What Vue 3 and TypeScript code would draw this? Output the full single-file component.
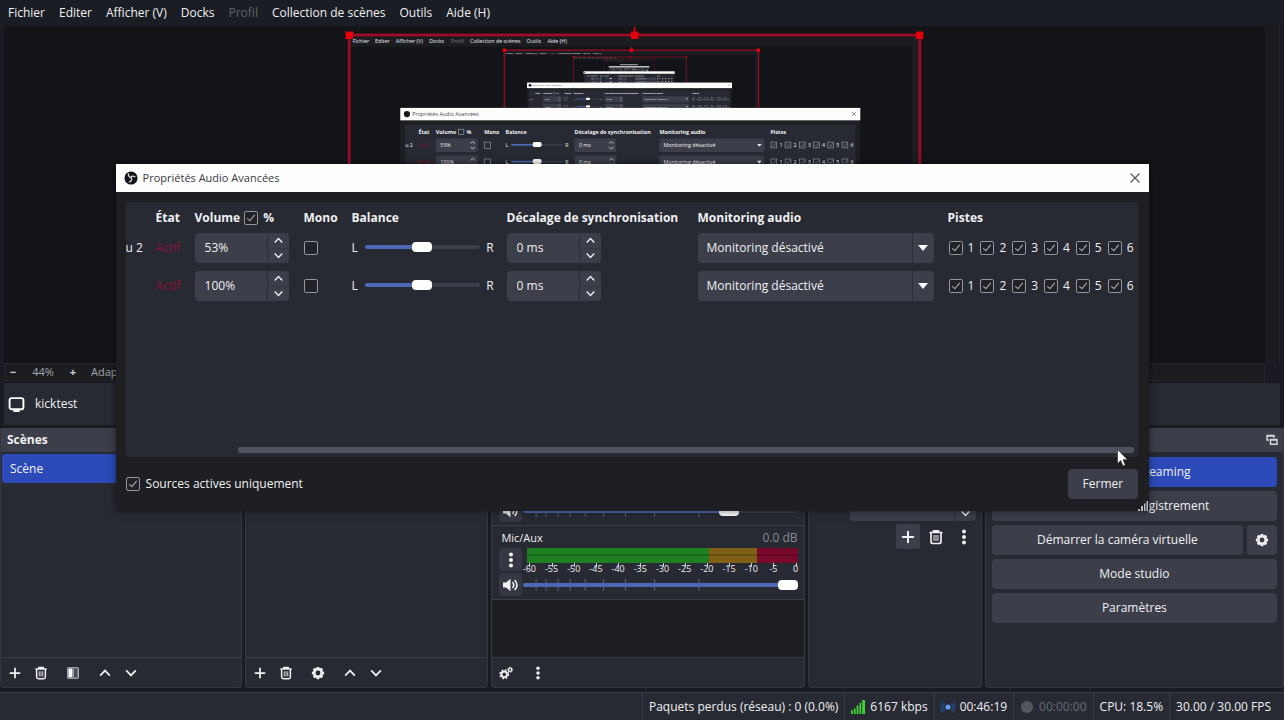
<script setup lang="ts">
import { ref } from 'vue'

interface MenuEntry { label: string; x: number; disabled?: boolean }
interface AudioRow { name: string; volume: string; offset: string; balance: number }
interface MixerStrip { name: string; level: string; volume: number }

const menus: MenuEntry[] = [
  { label: 'Fichier', x: 8 },
  { label: 'Editer', x: 58 },
  { label: 'Afficher (V)', x: 105 },
  { label: 'Docks', x: 180 },
  { label: 'Profil', x: 229, disabled: true },
  { label: 'Collection de scènes', x: 272 },
  { label: 'Outils', x: 399 },
  { label: 'Aide (H)', x: 446 },
]

const rows = ref<AudioRow[]>([
  { name: 'u 2', volume: '53%', offset: '0 ms', balance: 50 },
  { name: '', volume: '100%', offset: '0 ms', balance: 50 },
])

const strips = ref<MixerStrip[]>([
  { name: 'Audio du bureau 2', level: '-5.5 dB', volume: 77 },
  { name: 'Mic/Aux', level: '0.0 dB', volume: 100 },
])

const tracks = [1, 2, 3, 4, 5, 6]
const scale = ['-60', '-55', '-50', '-45', '-40', '-35', '-30', '-25', '-20', '-15', '-10', '-5', '0']
const faderTicks = [13, 23, 35, 47, 62, 80, 102, 131, 175]

/* The captured display contains the preview itself, so each level repeats the previous one at this ratio. */
const ratio = 0.4455
const levels = [0, 1, 2, 3, 4].map((depth) => {
  const k = Math.pow(ratio, depth)
  const sum = (1 - k) / (1 - ratio)
  return {
    depth,
    legible: depth < 2,
    transform: `translate(${349 * sum} ${34 * sum}) scale(${k})`,
  }
})
const levelsReversed = [...levels].reverse()
const sceneColumns = [
  { label: 'État', x: 156, w: 26 },
  { label: 'Volume', x: 195, w: 46 },
  { label: '%', x: 264, w: 12 },
  { label: 'Mono', x: 304, w: 34 },
  { label: 'Balance', x: 352, w: 50 },
  { label: 'Décalage de synchronisation', x: 507, w: 176 },
  { label: 'Monitoring audio', x: 698, w: 106 },
  { label: 'Pistes', x: 948, w: 36 },
]
</script>

<template>
  <div class="app">
    <svg class="sprite" aria-hidden="true">
      <symbol id="i-plus" viewBox="0 0 16 16"><path d="M8 2v12M2 8h12" fill="none" stroke="currentColor" stroke-width="2" /></symbol>
      <symbol id="i-trash" viewBox="0 0 16 16">
        <path d="M1.5 3.5h13M5.5 3V1.8h5V3M3 4v8.5q0 2 2 2h6q2 0 2-2V4" fill="none" stroke="currentColor" stroke-width="1.7" />
        <path d="M6 6v6M8 6v6M10 6v6" stroke="currentColor" stroke-width="1" />
      </symbol>
      <symbol id="i-gear" viewBox="0 0 16 16">
        <path fill="currentColor" fill-rule="evenodd" d="M6.600 1h2.800l.5 1.900 1.900-.9 2.100 2.100-1 1.800 2.100.7v2.800l-2.100.7 1 1.800-2.100 2.100-1.900-.9-.5 1.900H6.600l-.6-1.900-1.800.9-2.100-2.100 1-1.800L1 9.400V6.600l2.100-.7-1-1.800L4.200 2l1.800.9zM8 5.200a2.800 2.800 0 1 0 0 5.600a2.800 2.800 0 1 0 0-5.600z" />
      </symbol>
      <symbol id="i-gears" viewBox="0 0 16 16">
        <circle cx="6" cy="9.500" r="3.200" fill="none" stroke="currentColor" stroke-width="2.200" />
        <circle cx="6" cy="9.500" r="4.900" fill="none" stroke="currentColor" stroke-width="1.600" stroke-dasharray="2.100 1.750" />
        <circle cx="12.700" cy="4.300" r="1.900" fill="none" stroke="currentColor" stroke-width="1.500" />
        <circle cx="12.700" cy="4.300" r="2.900" fill="none" stroke="currentColor" stroke-width="1" stroke-dasharray="1.500 1.500" />
      </symbol>
      <symbol id="i-up" viewBox="0 0 16 16"><path d="M2.500 11L8 5.200 13.500 11" fill="none" stroke="currentColor" stroke-width="2" /></symbol>
      <symbol id="i-down" viewBox="0 0 16 16"><path d="M2.500 5L8 10.800 13.500 5" fill="none" stroke="currentColor" stroke-width="2" /></symbol>
      <symbol id="i-dots" viewBox="0 0 16 16"><g fill="currentColor"><circle cx="8" cy="2.500" r="2" /><circle cx="8" cy="8" r="2" /><circle cx="8" cy="13.500" r="2" /></g></symbol>
      <symbol id="i-filter" viewBox="0 0 16 16">
        <rect x="2" y="2" width="12" height="12" rx="1" fill="#4b4e58" stroke="#b9bbc2" stroke-width="1.400" />
        <path d="M3 3h4v10H3z" fill="#fefefe" /><path d="M7 3h2v10H7z" fill="#a5a7ae" />
      </symbol>
      <symbol id="i-speaker" viewBox="0 0 16 16">
        <path d="M0 5.500h3L7.500 1.800v12.400L3 10.500H0z" fill="currentColor" />
        <path d="M9.500 5q2.500 3 0 6M11.700 3q4.500 5 0 10" fill="none" stroke="currentColor" stroke-width="1.600" />
      </symbol>
      <symbol id="i-obs" viewBox="0 0 16 16">
        <circle cx="8" cy="8" r="7.500" fill="#15161a" />
        <path d="M5 3.200q0 4 3.300 4.200M12.500 6.600Q8.800 4.700 8.300 7.400M6.200 12.600q3.600-1.600 2.100-5.200" fill="none" stroke="#d9d9dc" stroke-width="1.500" stroke-linecap="round" />
      </symbol>
    </svg>

    <nav class="menubar">
      <button v-for="m in menus" :key="m.label" type="button" :disabled="m.disabled">{{ m.label }}</button>
    </nav>

    <section class="preview">
      <div class="canvas">
        <svg class="scene" viewBox="0 0 1284 720" aria-hidden="true">
          <g v-for="l in levels" :key="'b' + l.depth" :transform="l.transform">
            <rect width="1284" height="720" fill="#1b1d22" />
            <rect x="4" y="26" width="1261" height="337" fill="#131418" />
            <g v-if="l.legible" class="scene-text">
              <text v-for="m in menus" :key="m.label" :x="m.x" y="18" :opacity="m.disabled ? 0.4 : 1">{{ m.label }}</text>
            </g>
            <path v-else d="M8 13h480" stroke="#7d7f85" stroke-width="6" stroke-dasharray="36 14" />
            <rect y="383" width="1284" height="305" fill="#272a33" />
            <rect width="1284" height="720" fill="none" stroke="#a30b24" stroke-width="6" />
            <path d="M642 0v-18" stroke="#e0000e" stroke-width="4" />
            <path d="M-8 -8h17v17h-17zM1275 -8h17v17h-17zM634 -8h17v17h-17z" fill="#e0000e" />
          </g>
          <g v-for="l in levelsReversed" :key="'d' + l.depth" :transform="l.transform">
            <rect x="115" y="164" width="1035" height="347" fill="#1d1f23" />
            <rect x="126" y="202" width="1013" height="255" fill="#272a33" />
            <rect x="115" y="164" width="1035" height="28" fill="#fefefe" />
            <circle cx="130" cy="178" r="7" fill="#15161a" />
            <path d="M1131 173l9 9M1140 173l-9 9" stroke="#555" stroke-width="1.500" />
            <text v-if="l.legible" class="scene-title" x="142" y="182">Propriétés Audio Avancées</text>
            <g v-if="l.legible" class="scene-text scene-bold">
              <text v-for="c in sceneColumns" :key="c.label" :x="c.x" y="222">{{ c.label }}</text>
            </g>
            <g v-else fill="#b4b5ba">
              <rect v-for="c in sceneColumns" :key="c.label" :x="c.x" y="214" :width="c.w" height="7" />
            </g>
            <rect x="246" y="212" width="12" height="12" fill="none" stroke="#9b9da5" stroke-width="1.500" />
            <g v-for="(r, i) in rows" :key="i" :transform="`translate(0 ${i * 38})`" class="scene-text">
              <rect x="195" y="233" width="94" height="30" rx="3" fill="#3c3e4a" />
              <rect x="507" y="233" width="94" height="30" rx="3" fill="#3c3e4a" />
              <rect x="698" y="233" width="236" height="30" rx="3" fill="#3c3e4a" />
              <rect x="304" y="241" width="14" height="14" fill="none" stroke="#9b9da5" stroke-width="1.500" />
              <path d="M365 247h50" stroke="#4f68b6" stroke-width="4" />
              <path d="M430 247h50" stroke="#3c3e4a" stroke-width="4" />
              <rect x="413" y="241" width="20" height="11" rx="4" fill="#fefefe" />
              <path d="M273 244l5-4 5 4M273 252l5 4 5-4M585 244l5-4 5 4M585 252l5 4 5-4" fill="none" stroke="#d0d1d6" stroke-width="2" />
              <path d="M918 245h10l-5 6z" fill="#fefefe" />
              <g v-if="l.legible">
                <text x="126" y="253">{{ r.name }}</text>
                <text x="156" y="253" class="scene-active">Actif</text>
                <text x="205" y="253">{{ r.volume }}</text>
                <text x="352" y="253">L</text>
                <text x="486" y="253">R</text>
                <text x="517" y="253">{{ r.offset }}</text>
                <text x="707" y="253">Monitoring désactivé</text>
              </g>
              <path v-else d="M205 248h24M517 248h26M707 248h118" stroke="#a9abb1" stroke-width="6" />
              <g v-for="k in tracks" :key="k" :transform="`translate(${(k - 1) * 32} 0)`">
                <rect x="949" y="241" width="13" height="13" fill="none" stroke="#9b9da5" stroke-width="1.500" />
                <path d="M952 248l3 3 5-7" fill="none" stroke="#9b9da5" stroke-width="1.500" />
                <text v-if="l.legible" x="968" y="253">{{ k }}</text>
              </g>
            </g>
          </g>
        </svg>
      </div>
      <div class="gutter"></div>
    </section>

    <div class="zoombar">
      <button type="button" aria-label="Zoom arrière">−</button>
      <output>44%</output>
      <button type="button" aria-label="Zoom avant">+</button>
      <span>Adapter à la fenêtre</span>
    </div>

    <div class="context">
      <svg class="screen-icon" viewBox="0 0 16 16" aria-hidden="true">
        <rect x="1.500" y="2" width="13" height="10.500" rx="2" fill="none" stroke="#fefefe" stroke-width="1.800" />
        <path d="M5 13h6v2H5z" fill="#fefefe" />
      </svg>
      <span>kicktest</span>
    </div>

    <main class="docks">
      <section class="dock">
        <h2>Scènes</h2>
        <div class="body list"><button type="button" class="scene-item">Scène</button></div>
        <footer>
          <button type="button" aria-label="Ajouter"><svg><use href="#i-plus" /></svg></button>
          <button type="button" aria-label="Supprimer"><svg><use href="#i-trash" /></svg></button>
          <button type="button" class="wide" aria-label="Filtres"><svg><use href="#i-filter" /></svg></button>
          <button type="button" aria-label="Monter"><svg><use href="#i-up" /></svg></button>
          <button type="button" aria-label="Descendre"><svg><use href="#i-down" /></svg></button>
        </footer>
      </section>

      <section class="dock">
        <h2>Sources</h2>
        <div class="body"></div>
        <footer>
          <button type="button" aria-label="Ajouter"><svg><use href="#i-plus" /></svg></button>
          <button type="button" aria-label="Supprimer"><svg><use href="#i-trash" /></svg></button>
          <button type="button" class="wide" aria-label="Propriétés"><svg><use href="#i-gear" /></svg></button>
          <button type="button" aria-label="Monter"><svg><use href="#i-up" /></svg></button>
          <button type="button" aria-label="Descendre"><svg><use href="#i-down" /></svg></button>
        </footer>
      </section>

      <section class="dock">
        <h2>Mixage audio</h2>
        <div class="body mixer">
          <div v-for="s in strips" :key="s.name" class="strip">
            <div class="strip-head"><span>{{ s.name }}</span><span class="db">{{ s.level }}</span></div>
            <div class="strip-row">
              <button type="button" class="chip" aria-label="Options"><svg><use href="#i-dots" /></svg></button>
              <div class="meter">
                <div class="bar"></div>
                <div class="scale"><span v-for="v in scale" :key="v">{{ v }}</span></div>
              </div>
            </div>
            <div class="strip-row">
              <button type="button" class="chip" aria-label="Muet"><svg><use href="#i-speaker" /></svg></button>
              <div class="fader">
                <svg viewBox="0 0 273 12" preserveAspectRatio="none" aria-hidden="true">
                  <path v-for="x in faderTicks" :key="x" :d="`M${x} 0v12`" stroke="#596083" stroke-width="1" />
                </svg>
                <input v-model.number="s.volume" type="range" min="0" max="100" :aria-label="s.name" :style="{ '--fill': s.volume + '%' }">
              </div>
            </div>
          </div>
        </div>
        <footer>
          <button type="button" aria-label="Propriétés avancées"><svg><use href="#i-gears" /></svg></button>
          <button type="button" class="wide" aria-label="Menu"><svg><use href="#i-dots" /></svg></button>
        </footer>
      </section>

      <section class="dock">
        <h2>Transitions</h2>
        <div class="body transitions">
          <label class="duration">Durée
            <span class="spin"><input type="text" value="300 ms"><span class="steps">
              <button type="button" aria-label="Plus"><svg><use href="#i-up" /></svg></button>
              <button type="button" aria-label="Moins"><svg><use href="#i-down" /></svg></button>
            </span></span>
          </label>
          <div class="tools">
            <button type="button" class="filled" aria-label="Ajouter"><svg><use href="#i-plus" /></svg></button>
            <button type="button" aria-label="Supprimer"><svg><use href="#i-trash" /></svg></button>
            <button type="button" aria-label="Menu"><svg><use href="#i-dots" /></svg></button>
          </div>
        </div>
      </section>

      <section class="dock">
        <h2>Contrôles
          <svg class="float-icon" viewBox="0 0 12 12" aria-hidden="true">
            <path d="M3 6H1V1.500h7V4M1 2h7" fill="none" stroke="#d8d9dd" stroke-width="1.400" />
            <path d="M4.500 5.500h6.500v4.800H4.500zM4.500 6h6.500" fill="none" stroke="#d8d9dd" stroke-width="1.400" />
          </svg>
        </h2>
        <div class="body controls">
          <button type="button" class="btn primary">Arrêter le streaming</button>
          <button type="button" class="btn">Démarrer l'enregistrement</button>
          <div class="pair">
            <button type="button" class="btn">Démarrer la caméra virtuelle</button>
            <button type="button" class="btn square" aria-label="Configurer"><svg><use href="#i-gear" /></svg></button>
          </div>
          <button type="button" class="btn">Mode studio</button>
          <button type="button" class="btn">Paramètres</button>
        </div>
      </section>
    </main>

    <footer class="status">
      <span>Paquets perdus (réseau) : 0 (0.0%)</span>
      <span>
        <svg viewBox="0 0 15 15" aria-hidden="true"><path d="M0 11h2v4H0zM3 9h2v6H3zM6 6h2v9H6zM9 3h2v12H9zM12 0h3v15h-3z" fill="#3fd03a" /></svg>
        6167 kbps
      </span>
      <span>
        <svg viewBox="0 0 15 15" aria-hidden="true">
          <circle cx="7.500" cy="7.500" r="2.800" fill="#5b9bf0" />
          <path d="M4 3.500q-3 4 0 8M11 3.500q3 4 0 8M2 1.500q-3.500 6 0 12M13 1.500q3.500 6 0 12" fill="none" stroke="#244e91" stroke-width="1.300" />
        </svg>
        00:46:19
      </span>
      <span class="idle">
        <svg viewBox="0 0 15 15" aria-hidden="true"><circle cx="7.500" cy="7.500" r="6.500" fill="#54565e" /></svg>
        00:00:00
      </span>
      <span>CPU: 18.5%</span>
      <span>30.00 / 30.00 FPS</span>
    </footer>

    <section class="dialog" role="dialog" aria-labelledby="dialog-title">
      <header>
        <svg class="logo"><use href="#i-obs" /></svg>
        <h1 id="dialog-title">Propriétés Audio Avancées</h1>
        <button type="button" aria-label="Quitter">
          <svg viewBox="0 0 12 12"><path d="M1.500 1.500l9 9M10.500 1.500l-9 9" stroke="#55565a" stroke-width="1.200" /></svg>
        </button>
      </header>

      <div class="panel">
        <table>
          <colgroup>
            <col class="c-name"><col class="c-state"><col class="c-volume"><col class="c-mono">
            <col class="c-balance"><col class="c-offset"><col class="c-monitor"><col class="c-tracks">
          </colgroup>
          <thead>
            <tr>
              <th></th>
              <th>État</th>
              <th><label class="percent">Volume<input type="checkbox" checked><span>%</span></label></th>
              <th>Mono</th>
              <th>Balance</th>
              <th>Décalage de synchronisation</th>
              <th>Monitoring audio</th>
              <th>Pistes</th>
            </tr>
          </thead>
          <tbody>
            <tr v-for="(r, i) in rows" :key="i">
              <td>{{ r.name }}</td>
              <td class="active">Actif</td>
              <td>
                <span class="spin"><input v-model="r.volume" type="text" aria-label="Volume"><span class="steps">
                  <button type="button" aria-label="Plus"><svg><use href="#i-up" /></svg></button>
                  <button type="button" aria-label="Moins"><svg><use href="#i-down" /></svg></button>
                </span></span>
              </td>
              <td><input type="checkbox" aria-label="Mono"></td>
              <td>
                <span class="balance">
                  <span>L</span>
                  <input v-model.number="r.balance" type="range" min="0" max="100" aria-label="Balance" :style="{ '--fill': r.balance + '%' }">
                  <span>R</span>
                </span>
              </td>
              <td>
                <span class="spin"><input v-model="r.offset" type="text" aria-label="Décalage"><span class="steps">
                  <button type="button" aria-label="Plus"><svg><use href="#i-up" /></svg></button>
                  <button type="button" aria-label="Moins"><svg><use href="#i-down" /></svg></button>
                </span></span>
              </td>
              <td>
                <span class="combo">
                  <select aria-label="Monitoring audio"><option>Monitoring désactivé</option></select>
                  <span class="arrow"></span>
                </span>
              </td>
              <td>
                <span class="tracks">
                  <label v-for="k in tracks" :key="k"><input type="checkbox" checked>{{ k }}</label>
                </span>
              </td>
            </tr>
          </tbody>
        </table>
        <div class="hscroll"></div>
      </div>

      <div class="actions">
        <label><input type="checkbox" checked>Sources actives uniquement</label>
        <button type="button" class="btn">Fermer</button>
      </div>

      <svg class="signal" viewBox="0 0 10 10" aria-hidden="true"><path d="M0 8h2v2H0zM3 5h2v5H3zM6 2.500h1.500V10H6zM8.500 0H10v10H8.500z" fill="#b9bac0" /></svg>
      <svg class="pointer" viewBox="0 0 12 18" aria-hidden="true"><path d="M.5.500v14l3.200-3 2.300 5.500 2.300-1-2.300-5.300h4.500z" fill="#fff" stroke="#222" stroke-width=".6" /></svg>
    </section>
  </div>
</template>

<style>
body {
  margin: 0;
  background: #1b1d22;
}
</style>

<style scoped>
.app {
  position: relative;
  display: flex;
  flex-direction: column;
  min-height: 100vh;
  overflow: hidden;
  background: #1a1b22;
  color: #f0f0f2;
  font: 12px/16px "Open Sans", "Noto Sans", sans-serif;
}
.app *,
.app *::before {
  box-sizing: border-box;
}
.sprite {
  position: absolute;
  width: 0;
  height: 0;
}
button,
input,
select {
  margin: 0;
  padding: 0;
  border: 0;
  background: none;
  color: inherit;
  font: inherit;
}
h1,
h2 {
  margin: 0;
  font-size: 12px;
}
button svg {
  display: block;
  width: 14px;
  height: 14px;
  flex: none;
}

/* menu bar */
.menubar {
  display: flex;
  align-items: center;
  gap: 14px;
  height: 26px;
  padding: 0 8px;
  background: #1b1d24;
}
.menubar button:disabled {
  color: #63656d;
}

/* preview */
.preview {
  display: flex;
  flex: 1;
  min-height: 337px;
  padding: 0 4px;
}
.canvas {
  position: relative;
  flex: 1;
  background: #131418;
}
.scene {
  position: absolute;
  top: 9px;
  left: 0;
  width: 100%;
  height: calc(100% - 17px);
  overflow: visible;
}
.scene-text {
  fill: #f0f0f2;
  font-size: 12px;
}
.scene-bold {
  font-weight: 700;
}
.scene-title {
  fill: #44464c;
  font-size: 12px;
}
.scene-active {
  fill: #8c1239;
}
.gutter {
  width: 15px;
  border-right: 1px solid #25272f;
  background: #1a1b20;
}
.zoombar {
  display: flex;
  align-items: center;
  height: 18px;
  margin: 0 19px 0 4px;
  border: 1px solid #25272f;
  background: #1b1d21;
  color: #a2a4aa;
  font-size: 11px;
}
.zoombar button {
  width: 16px;
  color: #d0d1d5;
  font-weight: 700;
}
.zoombar output {
  width: 44px;
  text-align: center;
}
.zoombar span {
  margin-left: 10px;
}
.context {
  display: flex;
  align-items: center;
  gap: 10px;
  height: 42px;
  margin: 2px 4px 3px;
  padding: 0 5px 0 4px;
  background: #272a33;
}
.screen-icon {
  width: 17px;
  height: 17px;
}

/* docks */
.docks {
  display: grid;
  grid-template-columns: 242fr 243fr 313fr 174fr 299fr;
  gap: 3px;
  min-height: 260px;
}
.dock {
  display: flex;
  flex-direction: column;
  min-width: 0;
  border: 1px solid #353741;
  border-top: 0;
  border-radius: 0 0 4px 4px;
  background: #272a33;
}
.dock h2 {
  display: flex;
  align-items: center;
  justify-content: space-between;
  height: 24px;
  padding: 0 5px 0 6px;
  background: #3c3e49;
}
.float-icon {
  width: 12px;
  height: 12px;
}
.body {
  flex: 1;
}
.list {
  padding: 2px 1px;
}
.scene-item {
  display: block;
  width: 100%;
  height: 29px;
  padding: 0 8px;
  border-radius: 3px;
  background: #2c4bb8;
  text-align: left;
}
.dock > footer {
  display: flex;
  align-items: center;
  height: 30px;
  padding: 0 1px;
  border-top: 1px solid #3a3c46;
}
.dock > footer button {
  display: grid;
  place-items: center;
  width: 26px;
  height: 26px;
}
.dock > footer .wide {
  width: 38px;
}

/* mixer */
.mixer {
  background: #1e1f22;
}
.strip {
  height: 74px;
  padding: 4px 6px 0 7px;
  border-bottom: 1px solid #3a3c46;
  background: #272a33;
}
.strip-head {
  display: flex;
  justify-content: space-between;
  height: 18px;
  padding: 0 0 0 2px;
  font-size: 11px;
}
.db {
  color: #8a8c93;
  font-size: 12px;
}
.strip-row {
  display: flex;
  align-items: flex-start;
  height: 25px;
}
.chip {
  display: grid;
  flex: none;
  place-items: center;
  width: 23px;
  height: 23px;
  border-radius: 3px;
  background: #353742;
}
.chip svg {
  width: 16px;
  height: 16px;
}
.meter {
  flex: 1;
  margin-left: 5px;
}
.bar {
  height: 15px;
  background:
    linear-gradient(transparent 6px, rgba(0, 0, 0, 0.2) 6px, rgba(0, 0, 0, 0.2) 8px, transparent 8px),
    linear-gradient(90deg, #1f8023 67%, #806015 67%, #806015 85%, #7a0a2b 85%);
}
.scale {
  display: flex;
  justify-content: space-between;
  padding: 0 2px;
  font-size: 9px;
  line-height: 12px;
}
.scale span {
  position: relative;
  display: flex;
  justify-content: center;
  width: 0;
}
.scale span::before {
  content: "";
  position: absolute;
  top: 0;
  left: 0;
  width: 1px;
  height: 4px;
  background: #d0d1d5;
}
.fader {
  position: relative;
  display: flex;
  align-items: center;
  flex: 1;
  height: 23px;
  margin-left: 1px;
}
.fader svg {
  position: absolute;
  width: 100%;
  height: 12px;
}
.fader input {
  position: relative;
  width: 100%;
}
input[type="range"] {
  appearance: none;
  flex: 1;
  min-width: 0;
  height: 12px;
}
input[type="range"]::-webkit-slider-runnable-track {
  height: 4px;
  border-radius: 2px;
  background: linear-gradient(90deg, #4f68b6 var(--fill), #3c3e4a var(--fill));
}
input[type="range"]::-webkit-slider-thumb {
  appearance: none;
  width: 20px;
  height: 10px;
  margin-top: -3px;
  border-radius: 4px;
  background: #fefefe;
}

/* transitions */
.transitions {
  display: flex;
  flex-direction: column;
  gap: 3px;
  padding: 39px 5px 0;
}
.duration {
  display: flex;
  align-items: center;
  justify-content: space-between;
}
.duration .spin {
  width: 126px;
}
.tools {
  display: flex;
  justify-content: flex-end;
  gap: 4px;
}
.tools button {
  display: grid;
  place-items: center;
  width: 24px;
  height: 25px;
  border-radius: 3px;
}
.tools svg {
  width: 16px;
  height: 16px;
}
.tools .filled {
  background: #3c3e4a;
}

/* controls */
.controls {
  display: flex;
  flex-direction: column;
  gap: 4px;
  padding: 5px 6px;
}
.btn {
  height: 30px;
  padding: 0 15px;
  border-radius: 4px;
  background: #3c3e4a;
}
.primary {
  background: #2c4bb8;
}
.pair {
  display: flex;
  gap: 4px;
}
.pair .btn:first-child {
  flex: 1;
}
.square {
  display: grid;
  place-items: center;
  width: 30px;
  padding: 0;
}

/* status bar */
.status {
  display: flex;
  justify-content: flex-end;
  height: 28px;
  margin-top: 4px;
  padding-right: 7px;
  border-top: 1px solid #3a3c46;
  background: #272a33;
}
.status span {
  display: flex;
  align-items: center;
  gap: 5px;
  padding: 0 6px;
  border-left: 1px solid #3a3c46;
}
.status svg {
  width: 14px;
  height: 14px;
}
.status .idle {
  color: #6a6c74;
}

/* advanced audio dialog */
.dialog {
  position: absolute;
  top: 164px;
  left: 9%;
  width: 80.5%;
  background: #1d1f23;
  box-shadow: 0 0 8px rgba(0, 0, 0, 0.5);
}
.dialog header {
  display: flex;
  align-items: center;
  gap: 5px;
  height: 28px;
  padding: 0 8px;
  background: #fefefe;
  color: #3a3b40;
}
.dialog h1 {
  flex: 1;
  font-size: 11px;
  font-weight: 400;
}
.logo {
  width: 14px;
  height: 14px;
}
.dialog header svg {
  flex: none;
}
.dialog header button svg {
  width: 12px;
  height: 12px;
}
.panel {
  display: flex;
  flex-direction: column;
  justify-content: space-between;
  min-height: 255px;
  margin: 10px 11px 0 10px;
  padding-bottom: 4px;
  overflow: hidden;
  border-radius: 3px;
  background: #272a33;
}
table {
  width: 100%;
  border-collapse: collapse;
  table-layout: fixed;
}
.c-name { width: 30px; }
.c-state { width: 39px; }
.c-volume { width: 109px; }
.c-mono { width: 48px; }
.c-balance { width: 155px; }
.c-offset { width: 191px; }
.c-monitor { width: 250px; }
.c-tracks { width: 191px; }
th,
td {
  padding: 0;
  text-align: left;
  white-space: nowrap;
}
th {
  height: 27px;
  padding-top: 4px;
}
td {
  height: 38px;
}
.active {
  color: #8c1239;
}
.percent {
  display: flex;
  align-items: center;
}
.percent input {
  margin: 0 5px 0 4px;
}
input[type="checkbox"] {
  position: relative;
  appearance: none;
  display: block;
  flex: none;
  width: 14px;
  height: 14px;
  border: 1px solid #94969e;
  border-radius: 2px;
  background: #202228;
}
input[type="checkbox"]:checked::before {
  content: "";
  position: absolute;
  top: 1px;
  left: 4px;
  width: 4px;
  height: 8px;
  border: solid #b0b2b8;
  border-width: 0 1px 1px 0;
  transform: rotate(40deg);
}
.spin {
  display: flex;
  width: 94px;
  height: 30px;
  overflow: hidden;
  border-radius: 4px;
  background: #3c3e4a;
}
.spin input {
  flex: 1;
  min-width: 0;
  padding-left: 10px;
}
.steps {
  display: flex;
  flex-direction: column;
  width: 22px;
  border-left: 1px solid #2b2d37;
}
.steps button {
  display: grid;
  flex: 1;
  place-items: center;
}
.steps button + button {
  border-top: 1px solid #32343e;
}
.steps svg {
  width: 11px;
  height: 11px;
}
.balance {
  display: flex;
  align-items: center;
  width: 142px;
}
.balance input {
  margin: 0 6px 2px 7px;
}
.combo {
  position: relative;
  display: block;
  width: 236px;
}
.combo select {
  appearance: none;
  display: block;
  width: 100%;
  height: 30px;
  padding: 0 30px 0 9px;
  border-radius: 4px;
  background: #3c3e4a;
}
.arrow {
  position: absolute;
  top: 0;
  right: 0;
  display: grid;
  place-items: center;
  width: 22px;
  height: 100%;
  border-left: 1px solid #2b2d37;
  pointer-events: none;
}
.arrow::before {
  content: "";
  border: 5px solid transparent;
  border-top: 6px solid #fefefe;
  border-bottom: 0;
}
.tracks {
  display: flex;
}
.tracks label {
  display: flex;
  align-items: center;
  gap: 5px;
  width: 32px;
  padding-left: 1px;
}
.hscroll {
  height: 6px;
  margin: 0 4px 0 112px;
  border-radius: 2px;
  background: #50525d;
}
.actions {
  display: flex;
  align-items: center;
  justify-content: space-between;
  padding: 12px 11px 12px 10px;
}
.actions label {
  display: flex;
  align-items: center;
  gap: 6px;
}
.signal {
  position: absolute;
  right: 1px;
  bottom: 0;
  width: 10px;
  height: 10px;
}
.pointer {
  position: absolute;
  right: 20px;
  bottom: 44px;
  width: 12px;
  height: 18px;
}
</style>
